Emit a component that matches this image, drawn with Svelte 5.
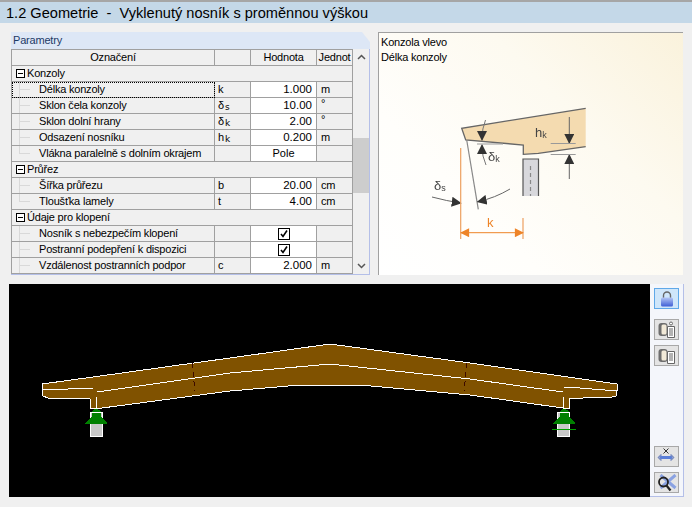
<script lang="ts">
  interface Row {
    name?: string
    sym?: string
    sub?: string
    value?: string
    unit?: string
    group?: boolean
    check?: boolean
    center?: boolean
    last?: boolean
    focus?: boolean
  }

  const rows: Row[] = [
    { group: true, name: 'Konzoly' },
    { name: 'Délka konzoly', sym: 'k', value: '1.000', unit: 'm', focus: true },
    { name: 'Sklon čela konzoly', sym: 'δ', sub: 's', value: '10.00', unit: '°' },
    { name: 'Sklon dolní hrany', sym: 'δ', sub: 'k', value: '2.00', unit: '°' },
    { name: 'Odsazení nosníku', sym: 'h', sub: 'k', value: '0.200', unit: 'm' },
    { name: 'Vlákna paralelně s dolním okrajem', value: 'Pole', center: true, last: true },
    { group: true, name: 'Průřez' },
    { name: 'Šířka průřezu', sym: 'b', value: '20.00', unit: 'cm' },
    { name: 'Tloušťka lamely', sym: 't', value: '4.00', unit: 'cm', last: true },
    { group: true, name: 'Údaje pro klopení' },
    { name: 'Nosník s nebezpečím klopení', check: true },
    { name: 'Postranní podepření k dispozici', check: true },
    { name: 'Vzdálenost postranních podpor', sym: 'c', value: '2.000', unit: 'm' }
  ]

  const beamOutline = '42,384 93,377 230,358 330,344 470,363 617,384 617,391 616,396 612,397 583,398 569,398 569,408 563,408 470,395 360,385 300,385 230,391 102,408 90,408 90,399 77,398 48,398 43,396'
  const beamMidLeft = '43,390 93,388'
  const beamMid = '97,392 230,373 330,364 470,379 563,392'
  const beamMidRight = '564,387 580,388 617,391'
</script>

<div class="window">
  <div class="title">1.2 Geometrie &nbsp;-&nbsp; Vyklenutý nosník s proměnnou výškou</div>

  <div class="upper">
    <section class="params">
      <div class="tab">Parametry</div>
      <div class="table-wrap">
        <div class="table">
          <div class="head">Označení</div>
          <div class="head"></div>
          <div class="head">Hodnota</div>
          <div class="head">Jednot</div>

          {#each rows as r}
            {#if r.group}
              <div class="group">
                <span class="box"></span>
                <span>{r.name}</span>
              </div>
            {:else}
              <div class="cell name" class:focus={r.focus}>
                <span class="tree" class:last={r.last}></span>
                <span>{r.name}</span>
              </div>
              <div class="cell sym">
                {#if r.sym}{r.sym}{/if}{#if r.sub}<span class="sub">{r.sub}</span>{/if}
              </div>
              <div class="cell value" class:center={r.center}>
                {#if r.check}
                  <svg class="check" width="12" height="12" viewBox="0 0 12 12">
                    <rect x="0.5" y="0.5" width="11" height="11" fill="#fff" stroke="#000" />
                    <path d="M3 6l2 2.500 4-6" fill="none" stroke="#000" stroke-width="1.600" />
                  </svg>
                {:else}
                  {r.value}
                {/if}
              </div>
              <div class="cell unit" class:deg={r.unit === '°'}>{r.unit ?? ''}</div>
            {/if}
          {/each}
        </div>

        <div class="scrollbar">
          <svg width="17" height="16" viewBox="0 0 17 16">
            <path d="M5 10l3.500-3.500L12 10" fill="none" stroke="#555" stroke-width="1.500" />
          </svg>
          <div class="track"><div class="thumb"></div></div>
          <svg width="17" height="16" viewBox="0 0 17 16">
            <path d="M5 6l3.500 3.500L12 6" fill="none" stroke="#555" stroke-width="1.500" />
          </svg>
        </div>
      </div>
    </section>

    <section class="figure">
      <div class="caption">
        <div>Konzola vlevo</div>
        <div>Délka konzoly</div>
      </div>
      <svg class="drawing" width="304" height="243" viewBox="378 32 304 243">
        <defs>
          <marker id="ah" viewBox="0 0 10 10" refX="9" refY="5" markerWidth="10" markerHeight="10" orient="auto-start-reverse" markerUnits="userSpaceOnUse">
            <path d="M0 0L10 5L0 10z" fill="#333" />
          </marker>
          <marker id="ao" viewBox="0 0 10 10" refX="9" refY="5" markerWidth="10" markerHeight="9" orient="auto-start-reverse" markerUnits="userSpaceOnUse">
            <path d="M0 0L10 5L0 10z" fill="#ee8428" />
          </marker>
        </defs>
        <path d="M461.700 128.300L585.700 108.300V146.700L538.300 153.300L523.300 154.300V145L465.700 140Z" fill="#f4dbb0" />
        <path d="M585.700 108.300L461.700 128.300L465.700 140L523.300 145V154.300L538.300 153.300L585.700 146.700" fill="none" stroke="#666" stroke-width="1.300" />
        <rect x="523" y="159" width="15" height="37" fill="#d8d8dc" />
        <path d="M523 196V159H538.500V196" fill="none" stroke="#555" stroke-width="1.200" />
        <path d="M530.500 166v30" stroke="#888" stroke-width="1.200" stroke-dasharray="4 3" />
        <!-- hk dimension -->
        <path d="M569.300 117V143" stroke="#666" marker-end="url(#ah)" />
        <path d="M569.300 179V155" stroke="#666" marker-end="url(#ah)" />
        <path d="M550.700 143.500H575.700M550.700 154.500H575.700" stroke="#999" />
        <!-- slope at the tip -->
        <path d="M485.500 120Q482 128 482 140" fill="none" stroke="#777" marker-end="url(#ah)" />
        <path d="M486 165Q482 157 482 145" fill="none" stroke="#777" marker-end="url(#ah)" />
        <path d="M477 144H503" stroke="#999" />
        <path d="M466.700 140L478.300 209.300" stroke="#888" stroke-width="1.200" />
        <!-- end slope -->
        <path d="M432 197Q447 201 460.700 203" fill="none" stroke="#666" marker-end="url(#ah)" />
        <path d="M510 189Q495 198 477.700 201.700" fill="none" stroke="#666" marker-end="url(#ah)" />
        <!-- k dimension -->
        <path d="M460.700 148V239M523 218V239" stroke="#eda060" stroke-width="1.200" />
        <path d="M461 232.700H523" stroke="#ee8428" marker-start="url(#ao)" marker-end="url(#ao)" />
        <text x="487" y="227" class="k">k</text>
        <text x="535" y="137" class="lbl">h<tspan class="lbl-sub" dy="1">k</tspan></text>
        <text x="488" y="161" class="lbl">δ<tspan class="lbl-sub" dy="1">k</tspan></text>
        <text x="434" y="190" class="lbl">δ<tspan class="lbl-sub" dy="1">s</tspan></text>
      </svg>
    </section>
  </div>

  <div class="lower">
    <div class="viewport">
      <svg width="641" height="213" viewBox="9 284 641 213" shape-rendering="crispEdges">
        <polygon points={beamOutline} fill="#805200" stroke="#fff" />
        <polyline points={beamMidLeft} fill="none" stroke="#fff" />
        <polyline points={beamMid} fill="none" stroke="#fff" />
        <polyline points={beamMidRight} fill="none" stroke="#fff" />
        <path d="M96.500 397V408M563.500 397V408" stroke="#fff" />
        <path d="M192 363L195 391M467 363L464 391" stroke="#3c0a00" stroke-dasharray="5 4" />

        <rect x="90.500" y="412.500" width="12" height="24" fill="#c8c8c8" stroke="#fff" />
        <rect x="557.500" y="412.500" width="12" height="24" fill="#c8c8c8" stroke="#fff" />
        <path d="M85 423.500L92 416V411L96 408.500L101 411V416L107.500 423.500Z" fill="#008000" />
        <path d="M553 423.500L560 416V411L564 408.500L569 411V416L575.500 423.500Z" fill="#008000" />
        <path d="M91 412H103M558 412H570" stroke="#fff" />
        <path d="M552 429.500H576" stroke="#00a000" />
      </svg>
    </div>

    <div class="tools">
      <button class="tool active" aria-label="Zamknout">
        <svg width="14" height="16" viewBox="0 0 14 16">
          <defs>
            <linearGradient id="lockfill" x1="0" y1="0" x2="0" y2="1">
              <stop offset="0" stop-color="#b4c6f4" />
              <stop offset="1" stop-color="#3f5fd6" />
            </linearGradient>
          </defs>
          <path d="M3.500 8V4.500a3.500 3.500 0 0 1 7 0V8" fill="none" stroke="#666" stroke-width="1.400" />
          <rect x="1" y="6.500" width="12" height="9" rx="1.500" fill="url(#lockfill)" />
        </svg>
      </button>
      <div class="gap1"></div>
      <button class="tool" aria-label="Export">
        <svg width="20" height="18" viewBox="0 0 20 18">
          <rect x="1.500" y="2" width="9" height="13" rx="3" fill="#6e6e6e" />
          <rect x="4.500" y="3.500" width="5" height="10" rx="1.500" fill="#f2ead8" />
          <path d="M10.500 5.500H17.500V16.500H10.500Z" fill="#fff" stroke="#666" />
          <path d="M12 8h4M12 10h4M12 12h4M12 14h4" stroke="#666" />
          <circle cx="14" cy="2.500" r="1.500" fill="#fff" stroke="#666" />
        </svg>
      </button>
      <button class="tool" aria-label="Import">
        <svg width="20" height="18" viewBox="0 0 20 18">
          <rect x="1.500" y="2" width="9" height="13" rx="3" fill="#6e6e6e" />
          <rect x="4.500" y="3.500" width="5" height="10" rx="1.500" fill="#f2ead8" />
          <path d="M10.500 4.500H17.500V16.500H10.500Z" fill="#fff" stroke="#666" />
          <path d="M12 7h4M12 9h4M12 11h4M12 13h4" stroke="#666" />
        </svg>
      </button>
      <div class="spacer"></div>
      <button class="tool" aria-label="Osa X">
        <svg width="22" height="18" viewBox="0 0 22 18">
          <path d="M7.500 0.500l5 5M12.500 0.500l-5 5" stroke="#333" />
          <path d="M4 9.500H16" stroke="#5b7fd8" stroke-width="3" />
          <path d="M5.500 6.500L2.500 9.500L5.500 12.500M14.500 6.500L17.500 9.500L14.500 12.500" fill="none" stroke="#7a8cc0" stroke-width="1.500" />
        </svg>
      </button>
      <button class="tool" aria-label="Zrušit zobrazení">
        <svg width="22" height="18" viewBox="0 0 22 18">
          <path d="M4.500 1L19.500 14M19.500 1L4.500 14" stroke="#8aa2e2" stroke-width="3" />
          <circle cx="7.500" cy="8" r="4.500" fill="none" stroke="#222" stroke-width="1.800" />
          <path d="M10.500 11.500l4 5" stroke="#222" stroke-width="2.200" />
        </svg>
      </button>
    </div>
  </div>
</div>

<style>
  :global(body) {
    margin: 0;
    background: #f0f0f0;
  }

  .window {
    width: 692px;
    height: 507px;
    display: flex;
    flex-direction: column;
    box-sizing: border-box;
    border-top: 2px solid #a6a6a6;
    overflow: hidden;
    font-family: "Liberation Sans", Arial, sans-serif;
    font-size: 11px;
    letter-spacing: -0.2px;
    color: #000;
    background: #f0f0f0;
  }

  .title {
    height: 21px;
    line-height: 23px;
    padding-left: 6px;
    flex-shrink: 0;
    background: #c4d8e8;
    font-size: 14.600px;
    letter-spacing: 0;
    white-space: nowrap;
  }

  .upper {
    display: flex;
    height: 261px;
    box-sizing: border-box;
    padding: 9px 9px 0 11px;
    gap: 8px;
    flex-shrink: 0;
  }

  .params {
    width: 359px;
    flex-shrink: 0;
    display: flex;
    flex-direction: column;
  }

  .tab {
    height: 17px;
    line-height: 17px;
    padding-left: 2px;
    color: #1c3a66;
    background: #dde7f6;
    clip-path: polygon(0 0, 351px 0, 100% 10px, 100% 100%, 0 100%);
    flex-shrink: 0;
  }

  .table-wrap {
    display: flex;
    height: 226px;
    box-sizing: border-box;
    border-right: 1px solid #b4bfe8;
    border-bottom: 1px solid #b4bfe8;
  }

  .table {
    width: 342px;
    height: 225px;
    flex-shrink: 0;
    display: grid;
    grid-template-columns: 203px 36px 66px 36px;
    grid-auto-rows: 16px;
    align-content: start;
    border-top: 1px solid #a0a0a0;
    border-left: 1px solid #a0a0a0;
    box-sizing: border-box;
  }

  .head,
  .cell,
  .group {
    box-sizing: border-box;
    height: 16px;
    line-height: 15px;
    border-bottom: 1px solid #a0a0a0;
    border-right: 1px solid #a0a0a0;
    white-space: nowrap;
    overflow: hidden;
    background: #f0f0f0;
  }

  .head {
    text-align: center;
  }

  .group {
    grid-column: 1 / -1;
    display: flex;
    align-items: center;
    gap: 2px;
    padding-left: 4px;
  }

  .box {
    position: relative;
    width: 9px;
    height: 9px;
    box-sizing: border-box;
    border: 1px solid #000;
    background: #fff;
    flex-shrink: 0;
  }

  .box::after {
    content: "";
    position: absolute;
    left: 1px;
    top: 3px;
    width: 5px;
    height: 1px;
    background: #000;
  }

  .name {
    display: flex;
    padding-left: 7px;
    gap: 9px;
  }

  .name.focus {
    outline: 1px dotted #000;
    outline-offset: -1px;
  }

  .tree {
    width: 11px;
    height: 15px;
    flex-shrink: 0;
    background:
      linear-gradient(#d9d9d9, #d9d9d9) 0 0 / 1px 100% no-repeat,
      linear-gradient(#d9d9d9, #d9d9d9) 0 7px / 100% 1px no-repeat;
  }

  .tree.last {
    background-size: 1px 8px, 100% 1px;
  }

  .sym {
    padding-left: 3px;
  }

  .sub {
    font-family: "DejaVu Sans", sans-serif;
    font-size: 9px;
    position: relative;
    top: 1px;
    margin-left: 1px;
  }

  .value {
    background: #fff;
    text-align: right;
    padding-right: 4px;
    font-size: 11.500px;
    letter-spacing: 0;
  }

  .value.center {
    text-align: center;
    padding-right: 0;
    font-size: 11px;
  }

  .check {
    display: block;
    margin: 2px 0 0 27px;
  }

  .unit {
    padding-left: 4px;
  }

  .unit.deg {
    line-height: 11px;
  }

  .scrollbar {
    width: 16px;
    display: flex;
    flex-direction: column;
    background: #f0f0f0;
  }

  .track {
    flex: 1;
    padding-top: 73px;
    box-sizing: border-box;
  }

  .thumb {
    height: 55px;
    background: #cdcdcd;
  }

  .figure {
    position: relative;
    width: 305px;
    height: 243px;
    box-sizing: border-box;
    flex-shrink: 0;
    border-left: 1px solid #a0a0a0;
    border-top: 1px solid #a0a0a0;
    background: linear-gradient(225deg, #faf2dc 0%, #fdfaf0 35%, #fffefb 70%, #fff 100%);
  }

  .caption {
    position: relative;
    z-index: 1;
    padding: 2px 0 0 2px;
    line-height: 15px;
  }

  .drawing {
    position: absolute;
    left: -1px;
    top: -1px;
    filter: blur(0.35px);
  }

  .k {
    font-size: 13px;
    fill: #ee8428;
    letter-spacing: 0;
  }

  .lbl {
    font-size: 13px;
    fill: #444;
    letter-spacing: 0;
  }

  .lbl-sub {
    font-size: 9px;
  }

  .lower {
    display: flex;
    margin: 0 8px 0 9px;
    height: 213px;
    flex-shrink: 0;
  }

  .viewport {
    width: 641px;
    height: 213px;
    background: #000;
    flex-shrink: 0;
  }

  .viewport svg {
    display: block;
  }

  .tools {
    flex: 1;
    display: flex;
    flex-direction: column;
    align-items: flex-end;
    box-sizing: border-box;
    padding: 4px 4px 3px 0;
    gap: 5px;
    background: #f4f6fb;
    border-right: 1px solid #b4bfe8;
    border-bottom: 1px solid #b4bfe8;
  }

  .tool {
    width: 25px;
    height: 21px;
    padding: 0;
    display: flex;
    align-items: center;
    justify-content: center;
    box-sizing: border-box;
    border: 1px solid #a8a8a8;
    background: #e4e4e4;
    flex-shrink: 0;
  }

  .tool.active {
    border-color: #5fa8e8;
    background: #cfe6fa;
  }

  .gap1 {
    height: 0;
    flex-shrink: 0;
  }

  .spacer {
    flex: 1;
  }
</style>
